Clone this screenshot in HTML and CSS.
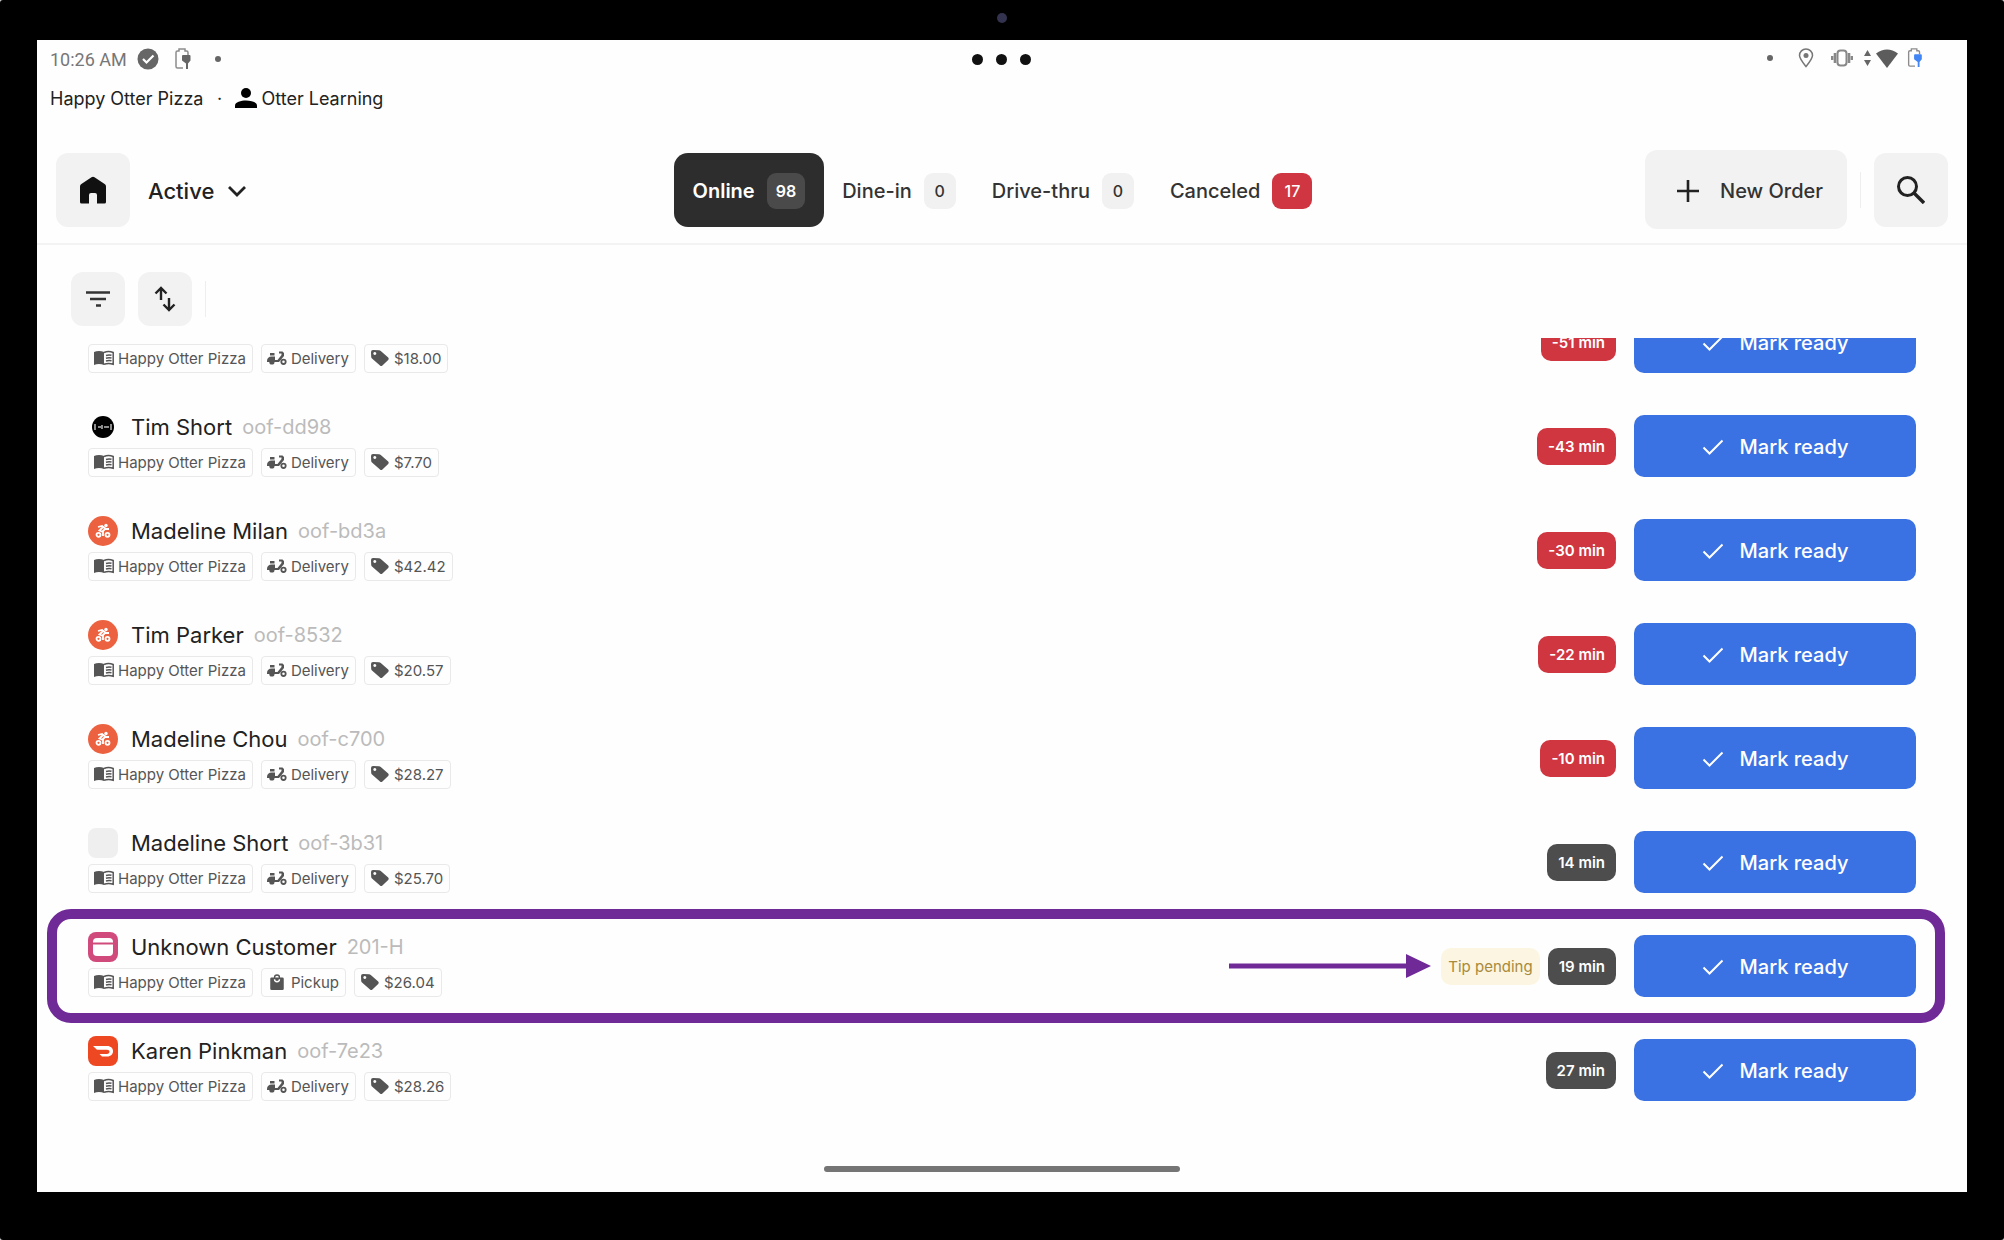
FILE: index.html
```html
<!DOCTYPE html>
<html lang="en">
  <head>
    <meta charset="UTF-8" />
    <meta name="viewport" content="width=device-width, initial-scale=1.0" />
    <title>Orders</title>
    <link rel="stylesheet" href="styles.css">
  </head>
  <body>
    <!-- Shared icons -->
    <svg class="sprite" aria-hidden="true">
      <symbol id="menu-book" viewBox="0 0 20 16">
        <path fill="currentColor" d="M0 2C3 .6 7 .6 10 2v13c-3-1.400-7-1.400-10 0z" />
        <path fill="none" stroke="currentColor" stroke-width="1.500" d="M10 2.500c3-1.400 6-1.400 9.200 0v11.700c-3-1-6-1-9.200 0M12 5.500c2-.7 3.500-.7 5.500-.2M12 8.200c2-.7 3.500-.7 5.500-.2M12 11c2-.7 3.500-.7 5.500-.2" />
      </symbol>
      <symbol id="scooter" viewBox="0 0 20 16">
        <path fill="currentColor" d="M3 3h4.500v2.500H3zM0 11c0-3 2-4.500 4.500-4.500H8V10h2.500L14.500 5V3.500H12V1.500h3.500L17 3v3l-5 6H7.500a2.600 2.600 0 0 1-5.200 0H0z" />
        <circle cx="16.500" cy="11.800" r="2.200" fill="none" stroke="currentColor" stroke-width="1.800" />
      </symbol>
      <symbol id="tag" viewBox="0 0 20 18">
        <path fill="currentColor" fill-rule="evenodd" d="M1 3Q1 1 3 1l6 .2q1 0 1.800.8l7.400 6.600q1.200 1.200 0 2.400l-5.800 5.600q-1.200 1-2.400 0L2 9.500Q1.200 8.800 1.200 8zM4.800 3a1.500 1.500 0 1 0 .01 0z" />
      </symbol>
      <symbol id="bag" viewBox="0 0 20 20">
        <path fill="currentColor" fill-rule="evenodd" d="M4 5h2.500a3.500 3.500 0 0 1 7 0H16q1.500 0 1.500 1.500v11q0 1.500-1.500 1.500H4q-1.500 0-1.500-1.500v-11Q2.500 5 4 5zm4 0h4a2 2 0 0 0-4 0zM6.500 7a3.500 3.500 0 0 0 7 0H12a2 2 0 0 1-4 0z" />
      </symbol>
      <symbol id="check" viewBox="0 0 22 18">
        <path fill="none" stroke="currentColor" stroke-width="2" d="M1.500 9.500 7.500 15.500 20.500 2.500" />
      </symbol>
      <symbol id="courier" viewBox="0 0 30 30">
        <circle cx="15" cy="15" r="15" fill="#ec6240" />
        <g fill="none" stroke="#fff" stroke-width="1.800">
          <circle cx="10.500" cy="18.800" r="2" />
          <circle cx="19.500" cy="18.800" r="2" />
          <path d="m10 11 4-1 4 3h3M15 11l-3.500 3.500L15 16v4M17 13l-3 3" />
        </g>
        <circle cx="18" cy="9.500" r="1.700" fill="#fff" />
      </symbol>
      <symbol id="battery" viewBox="0 0 16 22">
        <path fill="none" stroke="#8c8c8c" stroke-width="1.500" d="M8 20H2.500Q1 20 1 18.500V4.500Q1 3 2.500 3H4V1h6v2h1.500Q13 3 13 4.500V7" />
        <path fill="currentColor" d="M7 8q0-1 1-1h6.500q1 0 1 1v4.500L13 15.500V21h-2v-5.500l-4-3z" />
      </symbol>
    </svg>

    <div class="device">
      <span class="camera"></span>

      <main class="screen">
        <!-- Status bar -->
        <div class="status-bar">
          <div class="status-left">
            <span class="clock">10:26 AM</span>
            <svg width="22" height="22" viewBox="0 0 22 22"><circle cx="11" cy="11" r="10.500" fill="#666" /><path d="m6 11 3.500 3.500 7-7" fill="none" stroke="#fff" stroke-width="2.200" /></svg>
            <svg class="charging" width="16" height="22"><use href="#battery" /></svg>
            <span class="dot"></span>
          </div>
          <div class="window-dots"><i></i><i></i><i></i></div>
          <div class="status-right">
            <span class="dot"></span>
            <svg class="pin" width="16" height="20" viewBox="0 0 16 20"><path d="M8 18.500C4 13.500 1.500 10.500 1.500 7.500a6.500 6.500 0 0 1 13 0c0 3-2.500 6-6.500 11z" fill="none" stroke="#777" stroke-width="1.500" /><circle cx="8" cy="7.500" r="2.500" fill="#777" /></svg>
            <svg class="vibrate" width="22" height="18" viewBox="0 0 22 18"><rect x="6.500" y="1.500" width="9" height="15" rx="3" fill="none" stroke="#888" stroke-width="2" /><path d="M4 4v10M1 7v4M18 4v10M21 7v4" stroke="#888" stroke-width="2.600" /></svg>
            <svg class="traffic" width="7" height="16" viewBox="0 0 7 16"><path d="M3.500 0 7 6H0zM3.500 16 7 10H0z" fill="#666" /></svg>
            <svg class="wifi" width="22" height="19" viewBox="0 0 22 19"><path d="M0 4.500Q11-3.500 22 4.500L11 19z" fill="#5c5c5c" /></svg>
            <svg class="charging-blue" width="16" height="20"><use href="#battery" /></svg>
          </div>
        </div>

        <div class="account-line">
          <span>Happy Otter Pizza</span>
          <span class="separator">·</span>
          <svg width="22" height="22" viewBox="0 0 22 22"><circle cx="11" cy="6" r="5" /><path d="M0 21v-2.500C0 15 6 13.500 11 13.500s11 1.500 11 5V21z" /></svg>
          <span>Otter Learning</span>
        </div>

        <!-- Navigation -->
        <header class="top-bar">
          <div class="top-left">
            <button class="square-button" type="button" aria-label="Home">
              <svg width="28" height="28" viewBox="0 0 28 28"><path d="M1 10.500Q1 9 2 8.200L12.500 1.200Q14 .3 15.500 1.200L26 8.200Q27 9 27 10.500V26q0 1.500-1.500 1.500H18V19q0-2-2-2h-4q-2 0-2 2v8.500H2.500Q1 27.500 1 26z" fill="#111" /></svg>
            </button>
            <label class="view-select">
              <select aria-label="Order view">
                <option>Active</option>
              </select>
              <svg width="20" height="12" viewBox="0 0 20 12"><path d="m2 2 8 8 8-8" fill="none" stroke="#222" stroke-width="2.800" /></svg>
            </label>
          </div>

          <nav class="tabs">
            <button class="tab selected" type="button">Online <span class="count">98</span></button>
            <button class="tab" type="button">Dine-in <span class="count">0</span></button>
            <button class="tab" type="button">Drive-thru <span class="count">0</span></button>
            <button class="tab" type="button">Canceled <span class="count alert">17</span></button>
          </nav>

          <div class="top-right">
            <button class="new-order" type="button">
              <svg width="22" height="22" viewBox="0 0 22 22"><path d="M11 0v22M0 11h22" stroke="#222" stroke-width="2.600" /></svg>
              New Order
            </button>
            <span class="divider"></span>
            <button class="square-button" type="button" aria-label="Search">
              <svg width="28" height="28" viewBox="0 0 28 28"><circle cx="10.500" cy="10.500" r="9" fill="none" stroke="#222" stroke-width="3" /><path d="m17 17 10 10" stroke="#222" stroke-width="3.400" /></svg>
            </button>
          </div>
        </header>

        <div class="toolbar">
          <button class="tool-button" type="button" aria-label="Filter">
            <svg width="24" height="18" viewBox="0 0 24 18"><path d="M0 2.500h24M4 9h16M10 15.500h5" stroke="#333" stroke-width="2.600" /></svg>
          </button>
          <button class="tool-button" type="button" aria-label="Sort">
            <svg width="22" height="26" viewBox="0 0 22 26"><path d="M7 14V2M1.500 7.500 7 2l5.500 5.500M15 12v12M9.500 18.500 15 24l5.500-5.500" fill="none" stroke="#222" stroke-width="2.400" /></svg>
          </button>
          <span class="divider small"></span>
        </div>

        <!-- Orders, scrolled down to the end of the list -->
        <div class="order-scroll">
          <ul class="orders">
            <li class="order">
              <div class="order-info">
                <div class="order-title"></div>
                <div class="chips">
                  <span class="chip"><svg><use href="#menu-book" /></svg>Happy Otter Pizza</span>
                  <span class="chip"><svg><use href="#scooter" /></svg>Delivery</span>
                  <span class="chip"><svg><use href="#tag" /></svg>$18.00</span>
                </div>
              </div>
              <span class="time late">-51 min</span>
              <button class="mark-ready" type="button"><svg><use href="#check" /></svg>Mark ready</button>
            </li>

            <li class="order">
              <div class="order-info">
                <div class="order-title">
                  <svg class="logo" viewBox="0 0 30 30"><circle cx="15" cy="15" r="11" /><path d="M7 12v6M23 12v6M10 15h3M14 13v4M16 15h5" stroke="#bbb" stroke-width="1.500" /></svg>
                  <span class="customer">Tim Short</span>
                  <span class="order-id">oof-dd98</span>
                </div>
                <div class="chips">
                  <span class="chip"><svg><use href="#menu-book" /></svg>Happy Otter Pizza</span>
                  <span class="chip"><svg><use href="#scooter" /></svg>Delivery</span>
                  <span class="chip"><svg><use href="#tag" /></svg>$7.70</span>
                </div>
              </div>
              <span class="time late">-43 min</span>
              <button class="mark-ready" type="button"><svg><use href="#check" /></svg>Mark ready</button>
            </li>

            <li class="order">
              <div class="order-info">
                <div class="order-title">
                  <svg class="logo"><use href="#courier" /></svg>
                  <span class="customer">Madeline Milan</span>
                  <span class="order-id">oof-bd3a</span>
                </div>
                <div class="chips">
                  <span class="chip"><svg><use href="#menu-book" /></svg>Happy Otter Pizza</span>
                  <span class="chip"><svg><use href="#scooter" /></svg>Delivery</span>
                  <span class="chip"><svg><use href="#tag" /></svg>$42.42</span>
                </div>
              </div>
              <span class="time late">-30 min</span>
              <button class="mark-ready" type="button"><svg><use href="#check" /></svg>Mark ready</button>
            </li>

            <li class="order">
              <div class="order-info">
                <div class="order-title">
                  <svg class="logo"><use href="#courier" /></svg>
                  <span class="customer">Tim Parker</span>
                  <span class="order-id">oof-8532</span>
                </div>
                <div class="chips">
                  <span class="chip"><svg><use href="#menu-book" /></svg>Happy Otter Pizza</span>
                  <span class="chip"><svg><use href="#scooter" /></svg>Delivery</span>
                  <span class="chip"><svg><use href="#tag" /></svg>$20.57</span>
                </div>
              </div>
              <span class="time late">-22 min</span>
              <button class="mark-ready" type="button"><svg><use href="#check" /></svg>Mark ready</button>
            </li>

            <li class="order">
              <div class="order-info">
                <div class="order-title">
                  <svg class="logo"><use href="#courier" /></svg>
                  <span class="customer">Madeline Chou</span>
                  <span class="order-id">oof-c700</span>
                </div>
                <div class="chips">
                  <span class="chip"><svg><use href="#menu-book" /></svg>Happy Otter Pizza</span>
                  <span class="chip"><svg><use href="#scooter" /></svg>Delivery</span>
                  <span class="chip"><svg><use href="#tag" /></svg>$28.27</span>
                </div>
              </div>
              <span class="time late">-10 min</span>
              <button class="mark-ready" type="button"><svg><use href="#check" /></svg>Mark ready</button>
            </li>

            <li class="order">
              <div class="order-info">
                <div class="order-title">
                  <span class="logo empty"></span>
                  <span class="customer">Madeline Short</span>
                  <span class="order-id">oof-3b31</span>
                </div>
                <div class="chips">
                  <span class="chip"><svg><use href="#menu-book" /></svg>Happy Otter Pizza</span>
                  <span class="chip"><svg><use href="#scooter" /></svg>Delivery</span>
                  <span class="chip"><svg><use href="#tag" /></svg>$25.70</span>
                </div>
              </div>
              <span class="time">14 min</span>
              <button class="mark-ready" type="button"><svg><use href="#check" /></svg>Mark ready</button>
            </li>

            <li class="order highlighted">
              <div class="order-info">
                <div class="order-title">
                  <svg class="logo" viewBox="0 0 30 30"><rect width="30" height="30" rx="8" fill="#d14a7c" /><rect x="5" y="6" width="20" height="18" rx="4" fill="#fff" /><path d="M5 11.500h20" stroke="#d14a7c" stroke-width="2" /></svg>
                  <span class="customer">Unknown Customer</span>
                  <span class="order-id">201-H</span>
                </div>
                <div class="chips">
                  <span class="chip"><svg><use href="#menu-book" /></svg>Happy Otter Pizza</span>
                  <span class="chip"><svg><use href="#bag" /></svg>Pickup</span>
                  <span class="chip"><svg><use href="#tag" /></svg>$26.04</span>
                </div>
              </div>
              <svg class="arrow" width="202" height="24" viewBox="0 0 202 24"><path d="M0 9.500h177V0l25 12-25 12v-9.500H0z" fill="#702a98" /></svg>
              <span class="tip">Tip pending</span>
              <span class="time">19 min</span>
              <button class="mark-ready" type="button"><svg><use href="#check" /></svg>Mark ready</button>
            </li>

            <li class="order">
              <div class="order-info">
                <div class="order-title">
                  <svg class="logo" viewBox="0 0 30 30"><rect width="30" height="30" rx="8" fill="#ee4823" /><path d="M5 10h14c4 0 6 2.500 6 5.200S23 20.500 19 20.500h-5L11.500 18H19c1.500 0 2.500-1 2.500-2.200s-1-2-2.500-2H9z" fill="#fff" /></svg>
                  <span class="customer">Karen Pinkman</span>
                  <span class="order-id">oof-7e23</span>
                </div>
                <div class="chips">
                  <span class="chip"><svg><use href="#menu-book" /></svg>Happy Otter Pizza</span>
                  <span class="chip"><svg><use href="#scooter" /></svg>Delivery</span>
                  <span class="chip"><svg><use href="#tag" /></svg>$28.26</span>
                </div>
              </div>
              <span class="time">27 min</span>
              <button class="mark-ready" type="button"><svg><use href="#check" /></svg>Mark ready</button>
            </li>
          </ul>
        </div>

        <div class="home-indicator"></div>
      </main>
    </div>
  </body>
</html>
```
FILE: styles.css
```css
* {
  box-sizing: border-box;
}

body {
  margin: 0;
  background-color: #d8d8d8;
  color: #222;
  font-family: Inter, "Liberation Sans", sans-serif;
}

button,
select {
  border: none;
  background: none;
  padding: 0;
  color: inherit;
  font-family: inherit;
  cursor: pointer;
}

svg {
  flex: none;
}

.sprite {
  position: absolute;
  width: 0;
  height: 0;
}

.device {
  position: relative;
  display: flex;
  min-height: 100vh;
  padding: 40px 37px 48px;
  border-radius: 3px;
  background-color: #000;
}

.camera {
  position: absolute;
  top: 13px;
  left: 50%;
  width: 10px;
  height: 10px;
  margin-left: -5px;
  border-radius: 50%;
  background-color: #33334f;
}

.screen {
  flex: 1;
  display: flex;
  flex-direction: column;
  min-width: 0;
  background-color: #fefefe;
}

/* Status bar */
.status-bar {
  display: grid;
  grid-template-columns: 1fr auto 1fr;
  align-items: center;
  height: 38px;
  padding: 0 44px 0 13px;
}

.status-left,
.status-right {
  display: flex;
  align-items: center;
}

.status-right {
  justify-content: flex-end;
  padding-bottom: 2px;
}

.clock {
  margin-right: 10px;
  color: #777;
  font-family: Roboto, sans-serif;
  font-size: 18px;
}

.charging {
  margin: 0 24px 0 16px;
  color: #666;
}

.charging-blue {
  margin-left: 9px;
  color: #4285f4;
}

.dot {
  width: 6px;
  height: 6px;
  border-radius: 50%;
  background-color: #666;
}

.pin {
  margin-left: 25px;
}

.vibrate {
  margin-left: 17px;
}

.traffic {
  margin: 0 5px 0 11px;
}

.window-dots {
  display: flex;
  gap: 13px;
  margin-left: 30px;
}

.window-dots i {
  width: 11px;
  height: 11px;
  border-radius: 50%;
  background-color: #111;
}

.account-line {
  display: flex;
  align-items: center;
  height: 40px;
  margin-bottom: 18px;
  padding-left: 13px;
  font-size: 18px;
}

.account-line svg {
  margin-right: 4px;
}

.separator {
  width: 32px;
  text-align: center;
}

/* Navigation */
.top-bar {
  display: grid;
  grid-template-columns: 1fr auto 1fr;
  align-items: center;
  height: 109px;
  padding: 0 19px;
  border-bottom: 2px solid #f3f3f3;
}

.top-left,
.top-right,
.tabs,
.view-select {
  display: flex;
  align-items: center;
}

.top-right {
  justify-content: flex-end;
}

.square-button,
.tool-button {
  display: flex;
  align-items: center;
  justify-content: center;
  width: 74px;
  height: 74px;
  border-radius: 12px;
  background-color: #f2f2f2;
}

.view-select {
  gap: 12px;
  margin-left: 18px;
  padding-top: 2px;
}

.view-select select {
  appearance: none;
  font-size: 22px;
  font-weight: 500;
}

.tab {
  display: flex;
  align-items: center;
  gap: 12px;
  height: 74px;
  padding: 2px 18px 0;
  border-radius: 14px;
  color: #333;
  font-size: 20px;
  font-weight: 500;
}

.tab.selected {
  padding: 2px 19px 0;
  background-color: #2d2d2d;
  color: #fff;
  font-weight: 600;
}

.count {
  display: flex;
  align-items: center;
  justify-content: center;
  min-width: 32px;
  height: 36px;
  padding: 0 9px;
  border-radius: 9px;
  background-color: #f1f1f1;
  font-size: 16px;
}

.selected .count {
  background-color: #4a4a4a;
}

.count.alert {
  min-width: 40px;
  background-color: #d03641;
  color: #fff;
}

.new-order {
  display: flex;
  align-items: center;
  gap: 21px;
  height: 79px;
  padding: 2px 24px 0 32px;
  border-radius: 12px;
  background-color: #f2f2f2;
  color: #333;
  font-size: 20px;
  font-weight: 500;
}

.divider {
  width: 1px;
  height: 36px;
  margin: 0 13px;
  background-color: #eee;
}

/* Filter and sort */
.toolbar {
  display: flex;
  align-items: center;
  gap: 13px;
  padding: 27px 34px 12px;
}

.tool-button {
  width: 54px;
  height: 54px;
}

.divider.small {
  margin: 0;
}

/* Orders */
.order-scroll {
  flex: 1;
  overflow: hidden;
}

.orders {
  margin: -48px 0 0;
  padding: 0 51px;
  list-style: none;
}

.order {
  position: relative;
  display: flex;
  align-items: center;
  height: 104px;
}

.order-info {
  display: flex;
  flex-direction: column;
  gap: 6px;
  margin-right: auto;
  padding-bottom: 4px;
}

.order-title {
  display: flex;
  align-items: center;
  height: 30px;
}

.logo {
  width: 30px;
  height: 30px;
  margin-right: 13px;
}

.logo.empty {
  border-radius: 8px;
  background-color: #efefef;
}

.customer {
  margin-right: 10px;
  font-size: 22px;
}

.order-id {
  color: #bbb;
  font-size: 20px;
}

.chips {
  display: flex;
  gap: 8px;
}

.chip {
  display: flex;
  align-items: center;
  gap: 4px;
  height: 29px;
  padding: 0 6px 0 5px;
  border: 1px solid #e9e9e9;
  border-radius: 4px;
  color: #555;
  font-size: 15px;
}

.chip svg {
  width: 20px;
  height: 18px;
}

.time,
.tip {
  height: 37px;
  border-radius: 10px;
  font-size: 15px;
  line-height: 37px;
}

.time {
  margin-right: 18px;
  padding: 0 11px;
  background-color: #4d4d4d;
  color: #fff;
  font-weight: 600;
}

.time.late {
  background-color: #cf3640;
}

.tip {
  margin: 0 8px 0 10px;
  padding: 0 7px;
  background-color: #fcf5e1;
  color: #a88a3c;
}

.mark-ready {
  display: flex;
  align-items: center;
  justify-content: center;
  gap: 16px;
  width: 282px;
  height: 62px;
  padding-top: 2px;
  border-radius: 10px;
  background-color: #3a72e4;
  color: #fff;
  font-size: 20px;
  font-weight: 500;
}

.mark-ready svg {
  width: 22px;
  height: 18px;
}

/* Ring around the order being pointed out */
.highlighted::after {
  content: "";
  position: absolute;
  inset: -5px -29px -5px -41px;
  border: 10px solid #702a98;
  border-radius: 24px;
  pointer-events: none;
}

.home-indicator {
  width: 356px;
  height: 6px;
  margin: 0 auto 20px;
  border-radius: 3px;
  background-color: #757575;
}
```
